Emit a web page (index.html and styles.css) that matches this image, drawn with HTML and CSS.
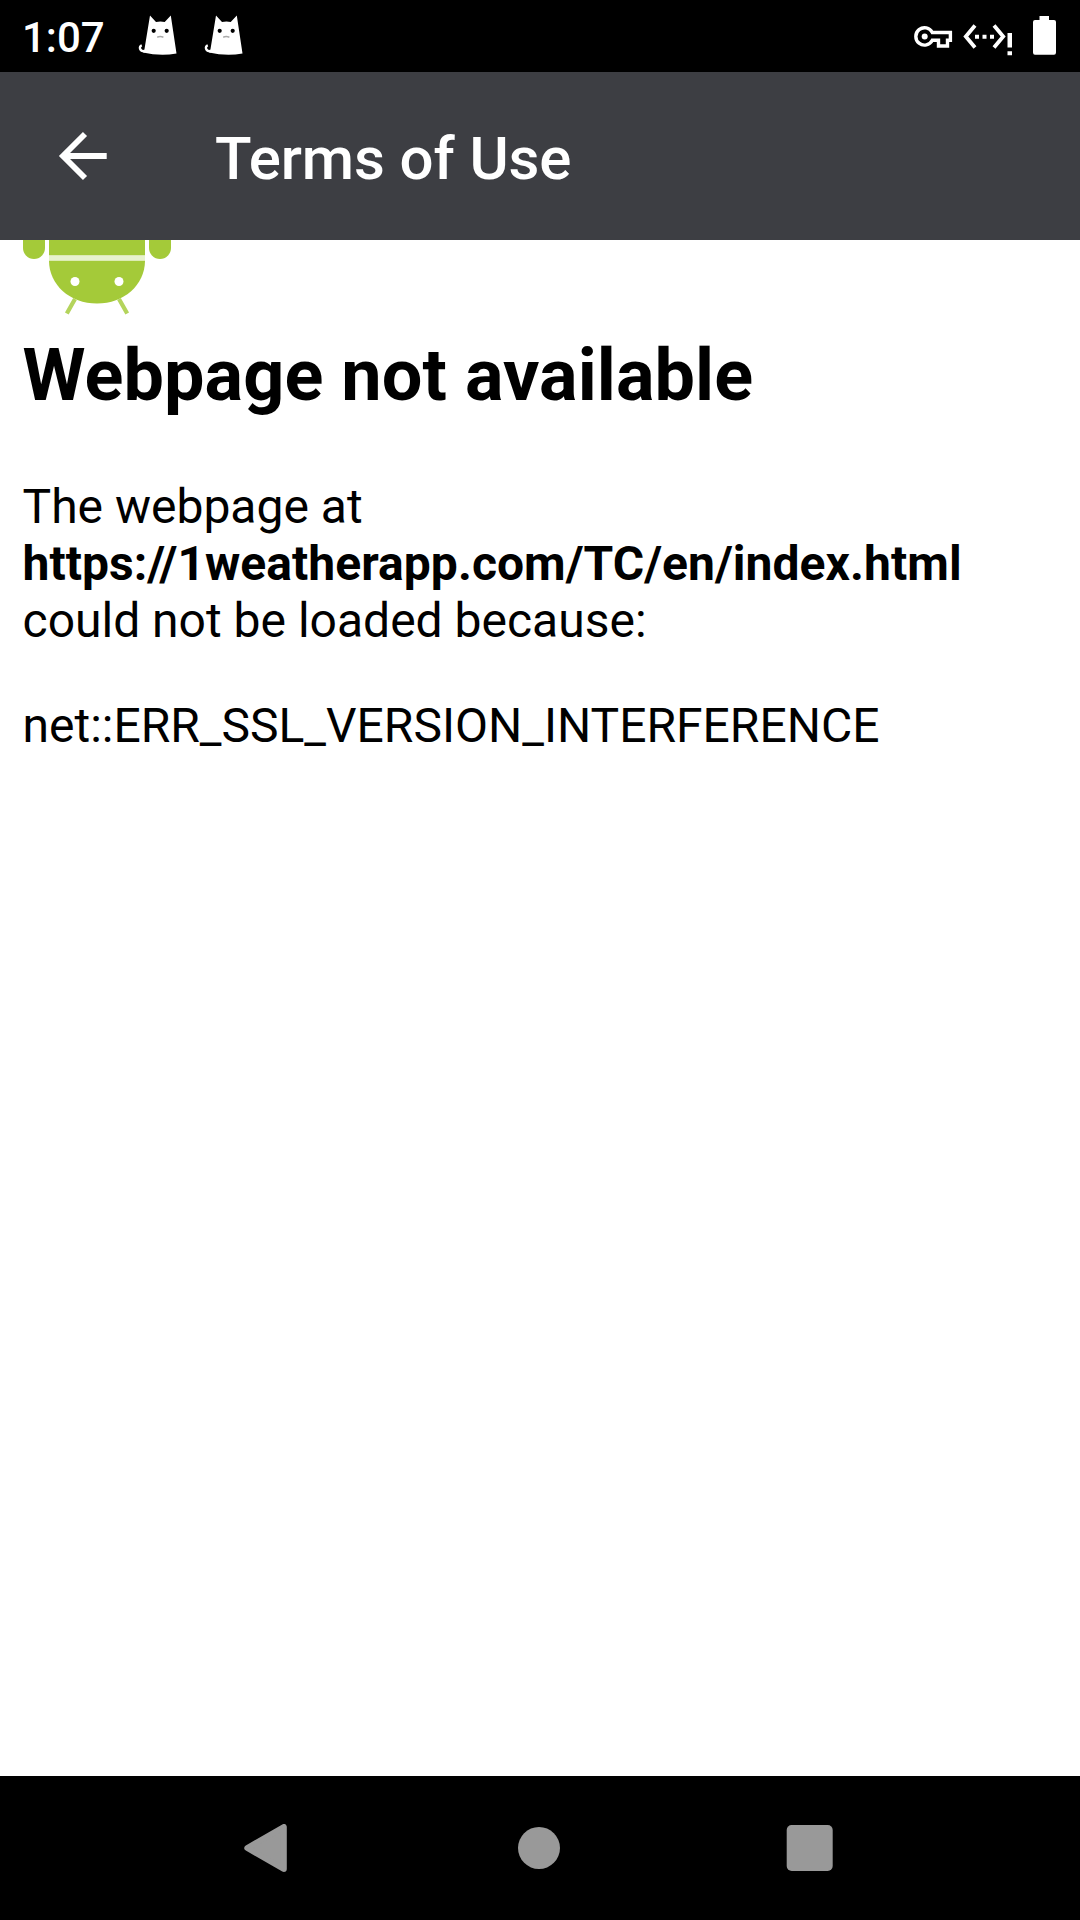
FILE: index.html
```html
<!DOCTYPE html>
<html lang="en">
<head>
<meta charset="utf-8">
<title>Terms of Use</title>
<link rel="stylesheet" href="styles.css">
</head>
<body>
<header class="status-bar">
  <span class="clock">1:07</span>
  <svg class="cat" width="40" height="42" viewBox="0 0 40 42">
    <path d="M7 36.200C1.500 36.500 .5 31.500 3.800 30.300" fill="none" stroke="#fff" stroke-width="2.400"/>
    <path d="M12 .6L18 7Q22.500 5.800 26.700 7L32.800 .6L38.500 38.600Q22 41.500 5 37.500L6.500 34Z" fill="#fff"/>
    <circle cx="15.700" cy="15.800" r="2.100"/><circle cx="28.700" cy="15.800" r="2.100"/>
    <path d="M19.200 22.200Q22.200 21 25.400 22.200" fill="none" stroke="#aaa" stroke-width="1.500"/>
  </svg>
  <svg class="cat" width="40" height="42" viewBox="0 0 40 42">
    <path d="M7 36.200C1.500 36.500 .5 31.500 3.800 30.300" fill="none" stroke="#fff" stroke-width="2.400"/>
    <path d="M12 .6L18 7Q22.500 5.800 26.700 7L32.800 .6L38.500 38.600Q22 41.500 5 37.500L6.500 34Z" fill="#fff"/>
    <circle cx="15.700" cy="15.800" r="2.100"/><circle cx="28.700" cy="15.800" r="2.100"/>
    <path d="M19.200 22.200Q22.200 21 25.400 22.200" fill="none" stroke="#aaa" stroke-width="1.500"/>
  </svg>
  <svg class="indicators" width="180" height="72" viewBox="0 0 180 72">
    <path d="M32.300 32.500A8.700 8.700 0 1 0 32.300 40.300H38.500V46H47.500V40.300H50.400V32.500Z" fill="none" stroke="#fff" stroke-width="3.400"/>
    <circle cx="24.700" cy="36.500" r="3" fill="#fff"/>
    <path d="M75 25.500L65.800 36.500L75 47.500M94 25.500L103.200 36.500L94 47.500" fill="none" stroke="#fff" stroke-width="3.800"/>
    <path d="M75 34.800h4v4h-4zM82.500 34.800h4v4h-4zM90 34.800h4v4h-4zM107.500 33h4.500v14.500h-4.500zM107.500 51.300h4.500v4h-4.500z" fill="#fff"/>
    <path d="M139.500 16H149V20H154Q156 20 156 22V52.500Q156 54.700 154 54.700H135Q133 54.700 133 52.500V22Q133 20 135 20H139.500Z" fill="#fff"/>
  </svg>
</header>
<nav class="app-bar">
  <svg class="back" width="50" height="50" viewBox="0 0 50 50">
    <path d="M27 3L5 25L27 47M5 25H48.700" fill="none" stroke="#fff" stroke-width="5.800"/>
  </svg>
  <h1 class="title">Terms of Use</h1>
</nav>
<main class="page">
  <svg class="robot" width="152" height="84" viewBox="0 0 152 84">
    <g fill="#a4ca39">
      <path d="M0 0H22V8A11 11 0 0 1 0 8ZM26 0H122V15.500H26ZM126 0H148V8A11 11 0 0 1 126 8Z"/>
      <path d="M26 20.500H122C122 45 101 63.500 74 63.500S26 45 26 20.500Z"/>
    </g>
    <path d="M26 18H122" stroke="#e7f2cc" stroke-width="5"/>
    <path d="M52 59L43.800 73.500M96 59L104.200 73.500" stroke="#b4d45c" stroke-width="4.200"/>
    <circle cx="52" cy="41.500" r="4.500" fill="#fff"/><circle cx="96" cy="41.500" r="4.500" fill="#fff"/>
  </svg>
  <h2 class="heading">Webpage not available</h2>
  <p class="message">The webpage at <strong class="address">https://1weatherapp.com/TC/en/index.html</strong> could not be loaded because:</p>
  <p class="message">net::ERR_SSL_VERSION_INTERFERENCE</p>
</main>
<footer class="nav-bar">
  <svg width="48" height="48" viewBox="0 0 48 48"><path d="M5.300 24L41.800 3V45Z" fill="#999" stroke="#999" stroke-width="6" stroke-linejoin="round"/></svg>
  <svg width="48" height="48" viewBox="0 0 48 48"><circle cx="24" cy="24" r="21" fill="#999"/></svg>
  <svg width="48" height="48" viewBox="0 0 48 48"><rect x=".7" y="1" width="46" height="46" rx="5" fill="#999"/></svg>
</footer>
</body>
</html>
```
FILE: styles.css
```css
* { box-sizing: border-box; }
body {
  margin: 0;
  height: 1920px;
  display: flex;
  flex-direction: column;
  overflow: hidden;
  background: #fff;
  color: #000;
  font-family: Roboto, sans-serif;
}
.status-bar {
  height: 72px;
  display: flex;
  align-items: flex-start;
  background: #000;
  color: #fff;
}
.clock {
  width: 115px;
  margin: 13px 0 0 22px;
  font-size: 42px;
  line-height: 50px;
  font-weight: 500;
}
.cat { margin: 15px 26px 0 1px; }
.cat + .cat { margin-left: 0; }
.indicators { margin-left: auto; }
.app-bar {
  height: 168px;
  display: flex;
  align-items: center;
  padding-left: 58px;
  background: #3d3e43;
  color: #fff;
}
.back { flex: none; }
.title {
  margin: 6px 0 0 107px;
  font-size: 60px;
  line-height: 70px;
  font-weight: 500;
  letter-spacing: -0.1px;
}
.page { flex: 1; padding: 0 22.5px; }
.robot { display: block; margin-bottom: 10px; }
.heading {
  margin: 0 0 60px;
  font-size: 72px;
  line-height: 84px;
  font-weight: 700;
  letter-spacing: 0.08px;
}
.message {
  margin: 0 0 48px;
  font-size: 48px;
  line-height: 57px;
}
.address {
  display: block;
  letter-spacing: 0.05px;
}
.nav-bar {
  height: 144px;
  display: grid;
  grid-template-columns: 273px 271px 48px;
  align-items: center;
  padding-left: 242px;
  background: #000;
}
```
